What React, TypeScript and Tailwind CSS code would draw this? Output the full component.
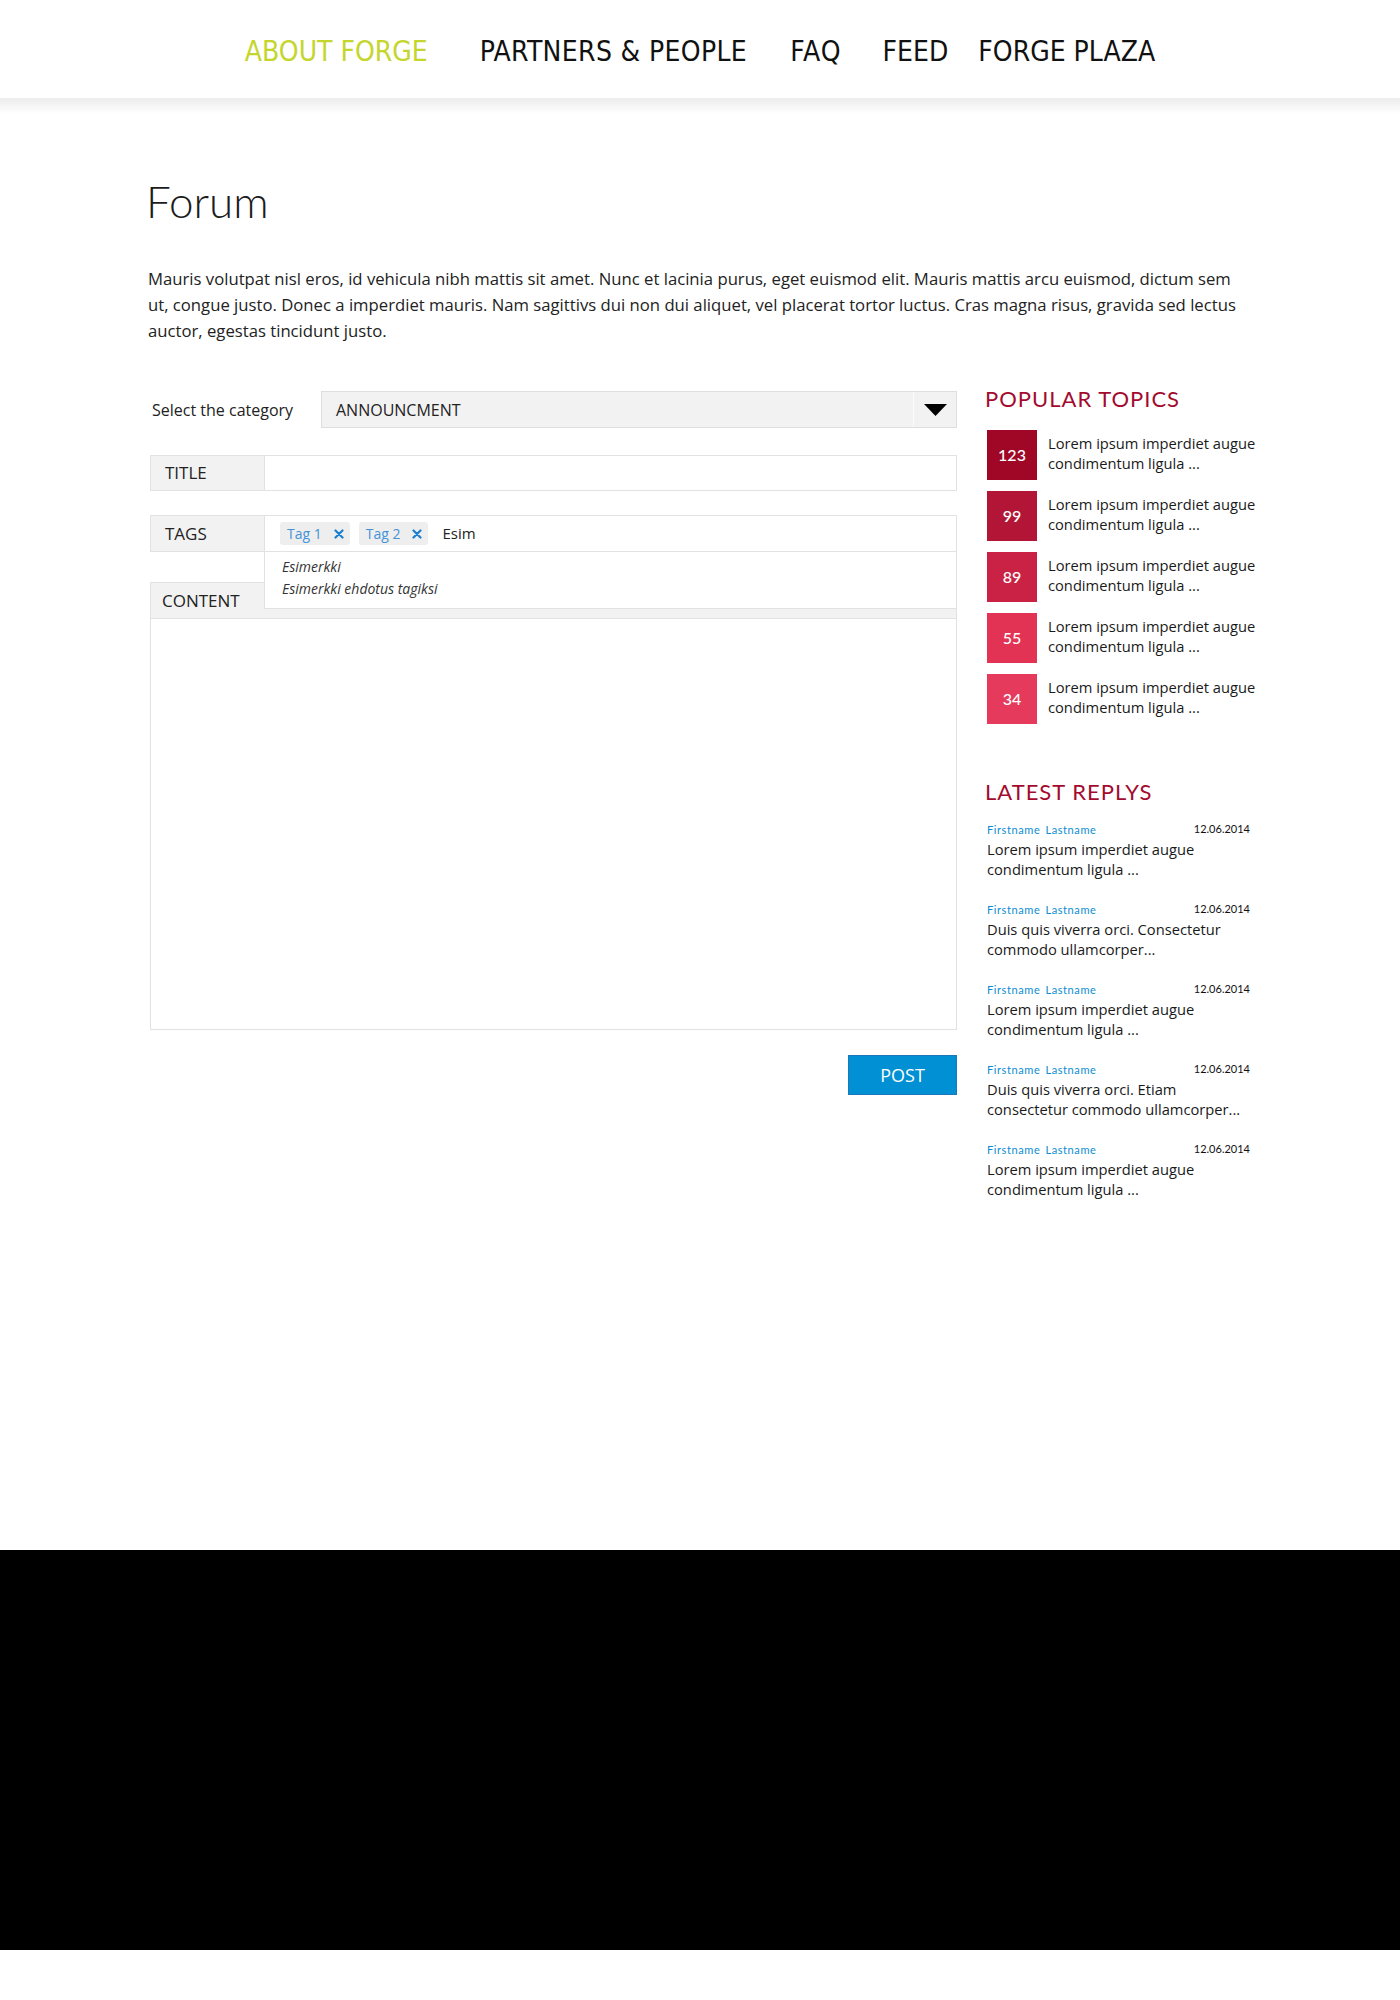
import React from "react";

const sans = { fontFamily: "'Open Sans', 'Noto Sans', sans-serif" };
const lato = { fontFamily: "Lato, 'Open Sans', sans-serif" };
const nav = { fontFamily: "'DejaVu Sans Condensed', 'DejaVu Sans', sans-serif", fontStretch: "condensed" as const };

const topics = [
  { n: "123", c: "bg-[#a00626]" },
  { n: "99", c: "bg-[#b31536]" },
  { n: "89", c: "bg-[#c92244]" },
  { n: "55", c: "bg-[#e23354]" },
  { n: "34", c: "bg-[#e53a5c]" },
];

const replies = [
  ["Lorem ipsum imperdiet augue", "condimentum ligula ..."],
  ["Duis quis viverra orci. Consectetur", "commodo ullamcorper..."],
  ["Lorem ipsum imperdiet augue", "condimentum ligula ..."],
  ["Duis quis viverra orci. Etiam", "consectetur commodo ullamcorper..."],
  ["Lorem ipsum imperdiet augue", "condimentum ligula ..."],
];

function Tag({ label }: { label: string }) {
  return (
    <span className="flex items-center h-[23px] rounded-[3px] bg-[#eeeeee] pl-[7px] pr-[6px] text-[14px] text-[#4493d9]">
      <span>{label}</span>
      <svg width="10" height="10" viewBox="0 0 10 10" className="ml-[12px]">
        <path d="M1.5 1.5 L8.5 8.5 M8.5 1.5 L1.5 8.5" stroke="#1b7fd0" strokeWidth="2.2" strokeLinecap="round" />
      </svg>
    </span>
  );
}

export default function App() {
  return (
    <div className="w-full bg-white text-[#1a1a1a]" style={sans}>
      <header className="h-[98px] bg-white flex items-center justify-center">
        <nav className="flex items-center text-[28px] leading-none pt-[6px]" style={nav}>
          <span className="text-[#c4d62c]">ABOUT FORGE</span>
          <span className="ml-[52px] tracking-[0.35px] text-[#111]">PARTNERS &amp; PEOPLE</span>
          <span className="ml-[43px] tracking-[1px] text-[#111]">FAQ</span>
          <span className="ml-[41px] text-[#111]">FEED</span>
          <span className="ml-[30px] text-[#111]">FORGE PLAZA</span>
        </nav>
      </header>
      <div className="h-[16px] bg-gradient-to-b from-[#ececec] to-white" />

      <main className="h-[1436px] pt-[62px]">
        <div className="w-[1104px] mx-auto">
          <h1 className="text-[44px] leading-[50px] font-light text-[#1c1c1c] -ml-[2px]" style={lato}>Forum</h1>
          <p className="mt-[40px] text-[16.7px] leading-[26px] text-[#222] whitespace-nowrap">
            Mauris volutpat nisl eros, id vehicula nibh mattis sit amet. Nunc et lacinia purus, eget euismod elit. Mauris mattis arcu euismod, dictum sem
            <br />
            ut, congue justo. Donec a imperdiet mauris. Nam sagittivs dui non dui aliquet, vel placerat tortor luctus. Cras magna risus, gravida sed lectus
            <br />
            auctor, egestas tincidunt justo.
          </p>

          <div className="mt-[42px] flex items-start">
            {/* form column */}
            <div className="ml-[2px] w-[807px] shrink-0 pt-[5px]">
              <div className="flex items-center h-[37px]">
                <div className="w-[171px] pl-[2px] text-[16px] text-[#222]">Select the category</div>
                <div className="flex-1 h-full flex items-stretch bg-[#f2f2f2] border border-[#dedede]">
                  <div className="flex-1 flex items-center pl-[14px] text-[16px] text-[#222]">ANNOUNCMENT</div>
                  <div className="w-[43px] border-l border-l-[#fbfbfb] flex items-center justify-center">
                    <svg width="23" height="12" viewBox="0 0 23 12">
                      <path d="M0 0 H23 L11.5 12 Z" fill="#000" />
                    </svg>
                  </div>
                </div>
              </div>

              <div className="mt-[27px] flex h-[36px] border border-[#e2e2e2]">
                <div className="w-[114px] bg-[#f2f2f2] border-r border-r-[#e2e2e2] flex items-center pl-[14px] text-[17px] text-[#222]">TITLE</div>
                <div className="flex-1 bg-white" />
              </div>

              <div className="relative mt-[24px]">
                <div className="flex h-[37px] border border-[#e2e2e2]">
                  <div className="w-[114px] bg-[#f2f2f2] border-r border-r-[#e2e2e2] flex items-center pl-[14px] text-[17px] text-[#222]">TAGS</div>
                  <div className="flex-1 bg-white flex items-center pl-[15px] gap-[9px]">
                    <Tag label="Tag 1" />
                    <Tag label="Tag 2" />
                    <span className="ml-[5px] text-[15px] text-[#222]">Esim</span>
                  </div>
                </div>

                <div className="mt-[30px] h-[37px] bg-[#f2f2f2] border border-[#e2e2e2] flex items-center pl-[11px] text-[17px] text-[#222]">CONTENT</div>
                <div className="h-[411px] bg-white border border-t-0 border-[#e2e2e2]" />

                <div className="absolute left-[114px] right-0 top-[37px] h-[57px] bg-white border border-t-0 border-[#e2e2e2] pl-[17px] pt-[4px] text-[14px] italic leading-[22px] text-[#333]">
                  <div>Esimerkki</div>
                  <div>Esimerkki ehdotus tagiksi</div>
                </div>
              </div>

              <div className="mt-[25px] flex justify-end">
                <button className="w-[109px] h-[40px] bg-[#0090d3] border border-[#1c78b8] text-white text-[18px]">POST</button>
              </div>
            </div>

            {/* sidebar */}
            <aside className="ml-[28px] w-[267px] shrink-0">
              <h2 className="text-[22px] leading-[25px] tracking-[1px] text-[#a30b2e]" style={lato}>POPULAR TOPICS</h2>
              <div className="mt-[19px] flex flex-col gap-[11px]">
                {topics.map((t) => (
                  <div key={t.n} className="flex items-start">
                    <div className={`w-[50px] h-[50px] shrink-0 ml-[2px] flex items-center justify-center text-white text-[16px] font-medium ${t.c}`} style={lato}>{t.n}</div>
                    <div className="ml-[11px] pt-[3px] text-[14.7px] leading-[20px] text-[#1a1a1a] whitespace-nowrap">
                      Lorem ipsum imperdiet augue
                      <br />
                      condimentum ligula ...
                    </div>
                  </div>
                ))}
              </div>

              <h2 className="mt-[55px] text-[22px] leading-[25px] tracking-[1px] text-[#a30b2e]" style={lato}>LATEST REPLYS</h2>
              <div className="mt-[19px] flex flex-col gap-[24px]">
                {replies.map((r, i) => (
                  <div key={i} className="ml-[2px]">
                    <div className="flex justify-between items-start h-[14px] text-[11px] leading-[14px] pr-[2px]" style={lato}>
                      <span className="text-[#0b8dd3] tracking-[0.6px]">
                        <span>Firstname</span>
                        <span className="ml-[5px]">Lastname</span>
                      </span>
                      <span className="text-[#111] -mt-[1px]">12.06.2014</span>
                    </div>
                    <div className="mt-[2px] text-[14.7px] leading-[20px] text-[#1a1a1a] whitespace-nowrap">
                      {r[0]}
                      <br />
                      {r[1]}
                    </div>
                  </div>
                ))}
              </div>
            </aside>
          </div>
        </div>
      </main>

      <footer className="h-[400px] bg-black" />
      <div className="h-[50px] bg-white" />
    </div>
  );
}
